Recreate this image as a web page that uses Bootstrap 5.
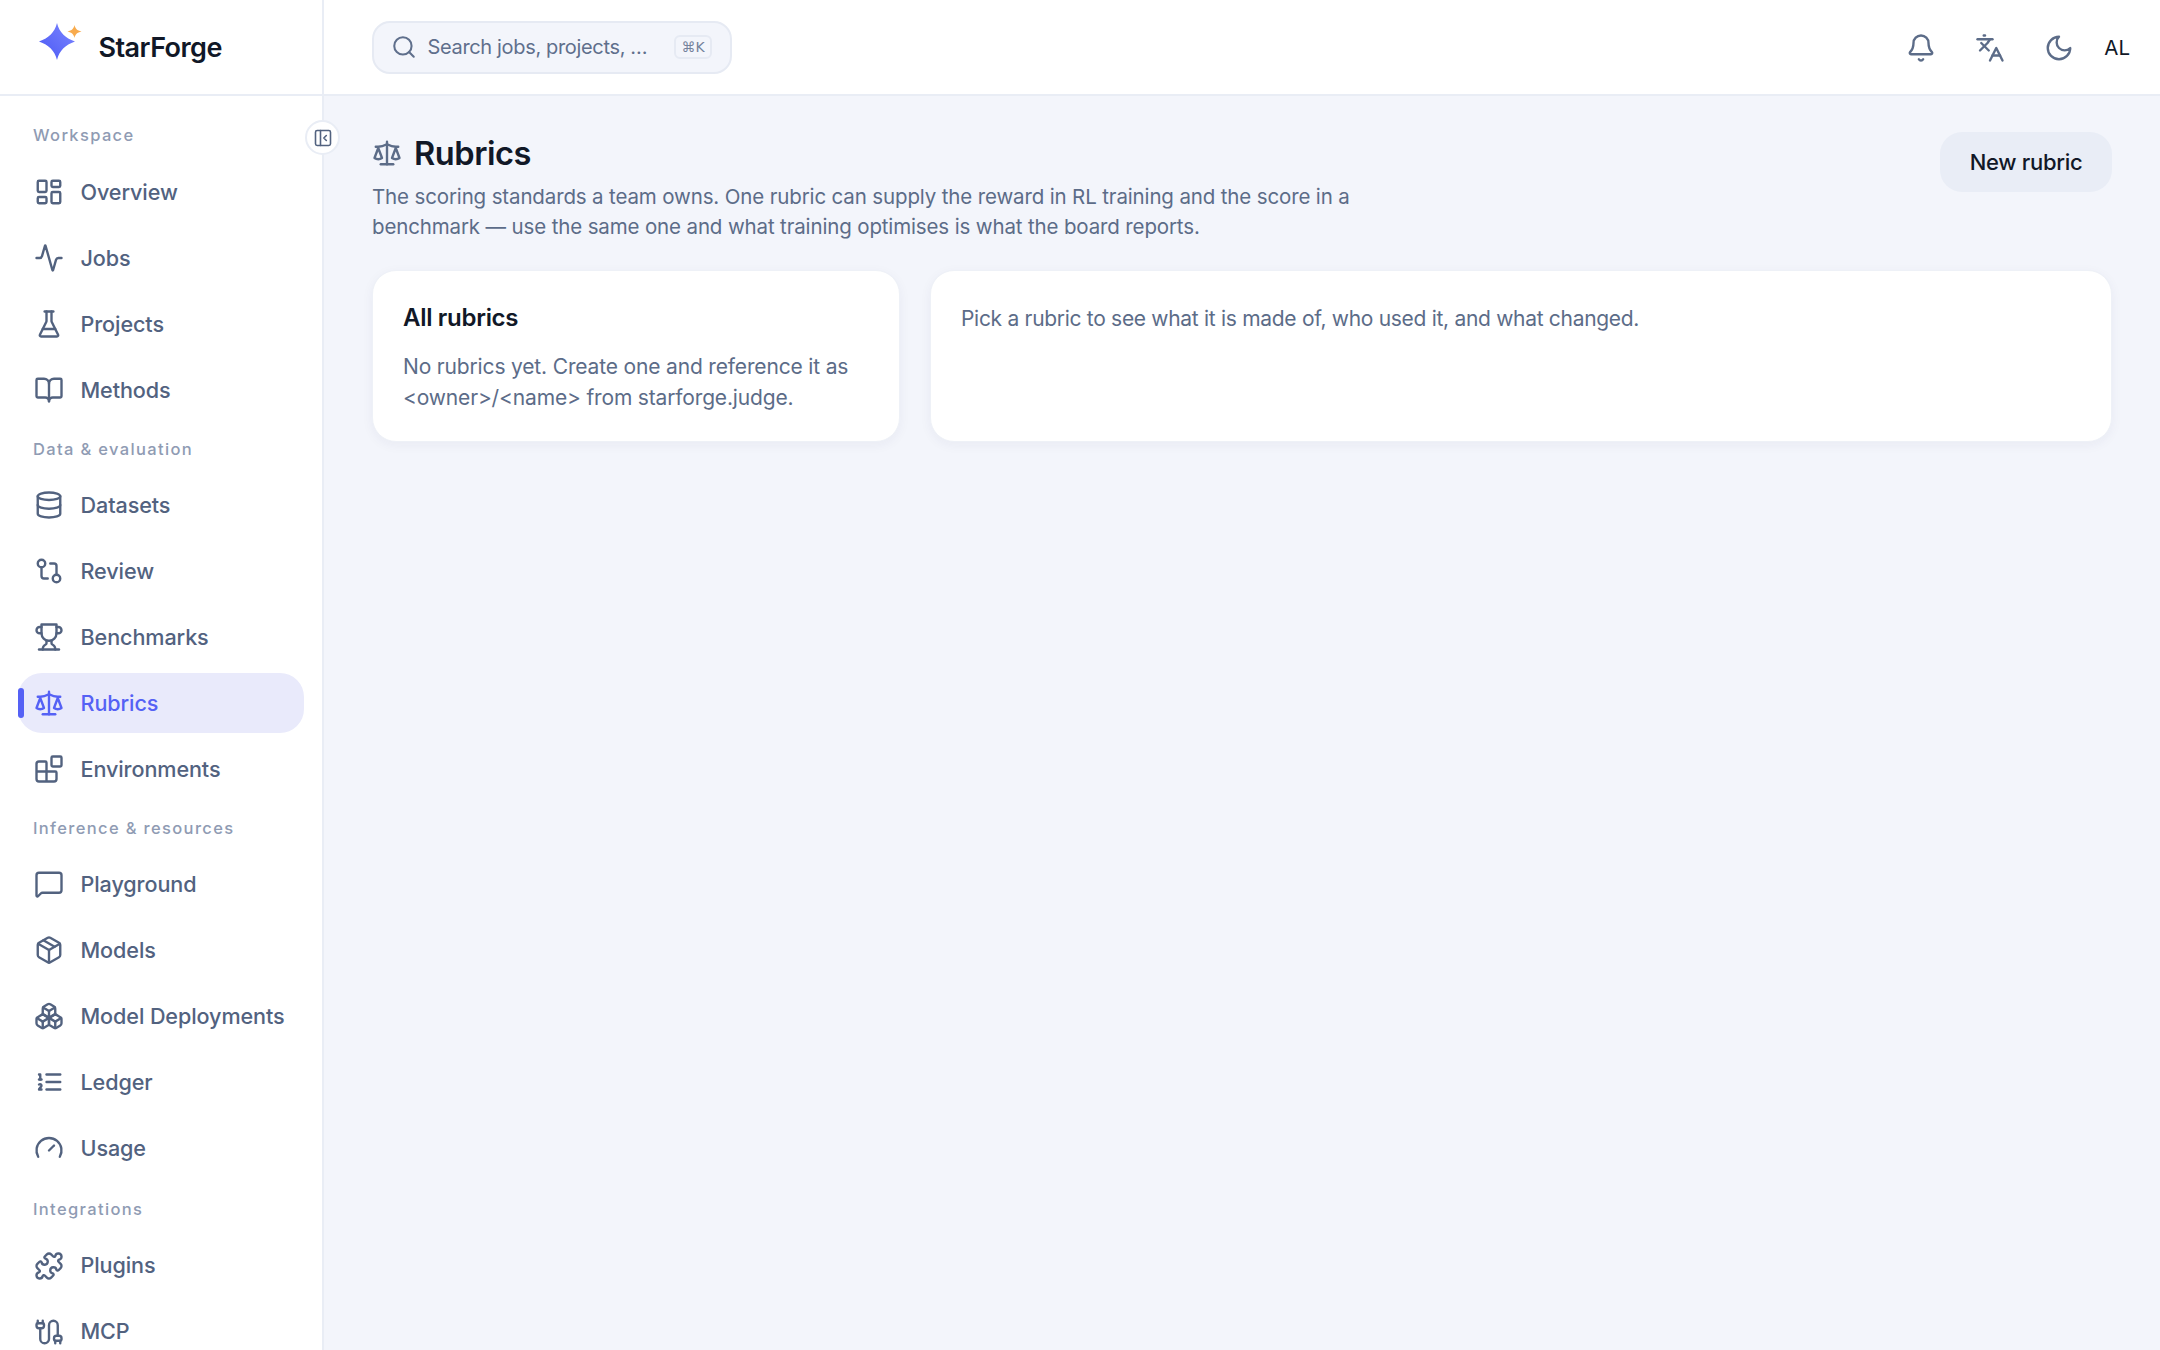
<!doctype html>
<html lang="en">
<head>
<meta charset="utf-8">
<title>Rubrics · StarForge</title>
<link href="https://cdn.jsdelivr.net/npm/bootstrap@5.3.0/dist/css/bootstrap.min.css" rel="stylesheet">
<style>
html,body{height:100%;}
body{font-family:Inter,"Noto Sans",sans-serif;background:#f3f5fb;color:#111827;overflow:hidden;}
svg.ico{fill:none;stroke:currentColor;stroke-width:1.9;stroke-linecap:round;stroke-linejoin:round;flex:none;}
.shell{height:1350px;}
.side{width:324px;flex:none;background:#fff;border-right:2px solid #e9edf5;position:relative;height:1350px;}
.brand{height:96px;border-bottom:2px solid #e9edf5;padding-left:36px;gap:6.500px;margin-right:-2px;}
.brand-name{font-size:27px;font-weight:600;letter-spacing:-.55px;color:#111827;margin-top:2px;}
.side-scroll{padding:27px 18px 0 18px;overflow:hidden;height:1254px;}
.grp{font-size:16.5px;font-weight:500;letter-spacing:1.35px;color:#8f9bb3;line-height:24px;padding-left:15px;}
.grp-next{margin-top:17px;margin-bottom:14px;}
.grp-last{margin-top:18.500px;margin-bottom:15px;}
.grp-first{margin-bottom:15px;}
.side .nav{gap:6px;}
.side .nav-link{height:60px;display:flex;align-items:center;gap:16.500px;padding:0 0 0 16px;border-radius:24px;color:#52627f;font-size:21.6px;font-weight:500;letter-spacing:-.1px;position:relative;}
.side .nav-link.active{background:#e9eafb;color:#5561f5;}
.side .nav-link.active::before{content:"";position:absolute;left:0;top:15px;width:6px;height:30px;border-radius:3px;background:#5561f5;}
.collapse-btn{position:absolute;left:305px;top:120px;width:35px;height:35px;border-radius:50%;background:#fff;border:2px solid #e9edf5;padding:0;display:flex;align-items:center;justify-content:center;color:#52627f;z-index:3;}
.main-col{min-width:0;}
.top{height:96px;background:#fff;border-bottom:2px solid #e9edf5;padding:0 30px 0 48px;}
.search{width:360px;height:53px;background:#f3f5fb;border:2px solid #e6eaf3;border-radius:18px;padding:0 18px 0 17px;gap:10.500px;color:#5f6f8c;font-size:20px;letter-spacing:-.34px;}
.keycap{margin-left:auto;width:38px;height:24px;border:2px solid #e6eaf3;border-radius:6px;font-size:14px;letter-spacing:0;display:flex;align-items:center;justify-content:center;color:#74829c;font-family:"DejaVu Sans",sans-serif;}
.tool{background:none;border:0;padding:0;color:#5c6c88;width:30px;height:30px;display:flex;}
.avatar{font-size:20.5px;color:#111827;margin-left:-9px;}
.tools{gap:39px;padding-top:2px;}
.page{padding:36px 48px 0;}
.page-h{font-size:32.6px;font-weight:600;letter-spacing:-.45px;color:#111827;margin:0;line-height:42px;}
.page-head-row{gap:12px;color:#5c6c88;margin-bottom:8px;}
.lede{font-size:20.5px;line-height:30px;color:#5c6c88;margin:0;width:1000px;letter-spacing:-.14px;}
.new-btn{background:#e9edf6;border:0;border-radius:22px;height:60px;width:172px;padding:0;font-size:22px;font-weight:500;color:#111827;letter-spacing:-.3px;}
.new-btn:hover{background:#e1e6f2;color:#111827;}
.panels{display:grid;grid-template-columns:528px 1fr;gap:30px;margin-top:28px;}
.panel{border:1px solid #eef1f7;border-radius:24px;background:#fff;box-shadow:0 3px 12px rgba(30,45,90,.05);height:172px;padding:30px 30px 0;}
.panel-t{font-size:24px;font-weight:600;letter-spacing:-.3px;color:#111827;line-height:34px;margin:0 0 17px;}
.panel-p{font-size:21px;line-height:30.5px;color:#5c6c88;margin:0;letter-spacing:-.16px;}
.panel-top{padding-top:3px;letter-spacing:-.3px;}
</style>
</head>
<body>
<div class="shell d-flex">
<aside class="side d-flex flex-column">
  <div class="brand d-flex align-items-center">
    <svg width="56" height="50" viewBox="0 0 56 50" aria-hidden="true">
      <defs><linearGradient id="sg" x1="0" y1="1" x2="1" y2="0"><stop offset="0" stop-color="#4a58f4"/><stop offset="1" stop-color="#7c86ff"/></linearGradient></defs>
      <path fill="url(#sg)" d="M21 1 C23.500 10.500 29 16 39 19.500 C29 23 23.500 28.500 21 38 C18.500 28.500 13 23 3 19.500 C13 16 18.500 10.500 21 1Z"/>
      <path fill="#f8ab4d" d="M38.500 3 C39.200 6.500 41 8.500 45.500 9.500 C41 10.500 39.200 12.500 38.500 16 C37.800 12.500 36 10.500 31.500 9.500 C36 8.500 37.800 6.500 38.500 3Z"/>
    </svg>
    <span class="brand-name">StarForge</span>
  </div>
  <button class="collapse-btn" type="button" aria-label="Collapse sidebar">
    <svg class="ico" width="20" height="20" viewBox="0 0 24 24"><rect x="3" y="3" width="18" height="18" rx="2"/><path d="M9 3v18"/><path d="m16 15-3-3 3-3"/></svg>
  </button>
  <div class="side-scroll">
    <div class="grp grp-first">Workspace</div>
    <nav class="nav flex-column">
      <a class="nav-link" href="#"><svg class="ico" width="30" height="30" viewBox="0 0 24 24"><rect x="3" y="3" width="7" height="9" rx="1"/><rect x="14" y="3" width="7" height="5" rx="1"/><rect x="14" y="12" width="7" height="9" rx="1"/><rect x="3" y="16" width="7" height="5" rx="1"/></svg>Overview</a>
      <a class="nav-link" href="#"><svg class="ico" width="30" height="30" viewBox="0 0 24 24"><path d="M22 12h-2.480a2 2 0 0 0-1.930 1.460l-2.350 8.360a.25.25 0 0 1-.48 0L9.240 2.180a.25.25 0 0 0-.48 0l-2.350 8.360A2 2 0 0 1 4.490 12H2"/></svg>Jobs</a>
      <a class="nav-link" href="#"><svg class="ico" width="30" height="30" viewBox="0 0 24 24"><path d="M10 2v7.527a2 2 0 0 1-.211.896L4.720 20.550a1 1 0 0 0 .9 1.450h12.760a1 1 0 0 0 .9-1.450l-5.069-10.127A2 2 0 0 1 14 9.527V2"/><path d="M8.500 2h7"/><path d="M7 16h10"/></svg>Projects</a>
      <a class="nav-link" href="#"><svg class="ico" width="30" height="30" viewBox="0 0 24 24"><path d="M12 7v14"/><path d="M3 18a1 1 0 0 1-1-1V4a1 1 0 0 1 1-1h5a4 4 0 0 1 4 4 4 4 0 0 1 4-4h5a1 1 0 0 1 1 1v13a1 1 0 0 1-1 1h-6a3 3 0 0 0-3 3 3 3 0 0 0-3-3z"/></svg>Methods</a>
    </nav>
    <div class="grp grp-next">Data &amp; evaluation</div>
    <nav class="nav flex-column">
      <a class="nav-link" href="#"><svg class="ico" width="30" height="30" viewBox="0 0 24 24"><ellipse cx="12" cy="5" rx="9" ry="3"/><path d="M3 5V19A9 3 0 0 0 21 19V5"/><path d="M3 12A9 3 0 0 0 21 12"/></svg>Datasets</a>
      <a class="nav-link" href="#"><svg class="ico" width="30" height="30" viewBox="0 0 24 24"><circle cx="18" cy="18" r="3"/><circle cx="6" cy="6" r="3"/><path d="M13 6h3a2 2 0 0 1 2 2v7"/><path d="M11 18H8a2 2 0 0 1-2-2V9"/></svg>Review</a>
      <a class="nav-link" href="#"><svg class="ico" width="30" height="30" viewBox="0 0 24 24"><path d="M6 9H4.500a2.500 2.500 0 0 1 0-5H6"/><path d="M18 9h1.500a2.500 2.500 0 0 0 0-5H18"/><path d="M4 22h16"/><path d="M10 14.660V17c0 .55-.47.98-.97 1.210C7.850 18.750 7 20.240 7 22"/><path d="M14 14.660V17c0 .55.47.98.97 1.210C16.150 18.750 17 20.240 17 22"/><path d="M18 2H6v7a6 6 0 0 0 12 0V2Z"/></svg>Benchmarks</a>
      <a class="nav-link active" href="#"><svg class="ico" width="30" height="30" viewBox="0 0 24 24"><path d="m16 16 3-8 3 8c-.87.65-1.920 1-3 1s-2.130-.35-3-1Z"/><path d="m2 16 3-8 3 8c-.87.65-1.920 1-3 1s-2.130-.35-3-1Z"/><path d="M7 21h10"/><path d="M12 3v18"/><path d="M3 7h2c2 0 5-1 7-2 2 1 5 2 7 2h2"/></svg>Rubrics</a>
      <a class="nav-link" href="#"><svg class="ico" width="30" height="30" viewBox="0 0 24 24"><path d="M10 22V7a1 1 0 0 0-1-1H4a2 2 0 0 0-2 2v12a2 2 0 0 0 2 2h12a2 2 0 0 0 2-2v-5a1 1 0 0 0-1-1H2"/><rect x="14" y="2" width="8" height="8" rx="1"/></svg>Environments</a>
    </nav>
    <div class="grp grp-next">Inference &amp; resources</div>
    <nav class="nav flex-column">
      <a class="nav-link" href="#"><svg class="ico" width="30" height="30" viewBox="0 0 24 24"><path d="M22 17a2 2 0 0 1-2 2H6.828a2 2 0 0 0-1.414.586l-2.202 2.202A.71.71 0 0 1 2 21.286V5a2 2 0 0 1 2-2h16a2 2 0 0 1 2 2z"/></svg>Playground</a>
      <a class="nav-link" href="#"><svg class="ico" width="30" height="30" viewBox="0 0 24 24"><path d="M11 21.730a2 2 0 0 0 2 0l7-4A2 2 0 0 0 21 16V8a2 2 0 0 0-1-1.730l-7-4a2 2 0 0 0-2 0l-7 4A2 2 0 0 0 3 8v8a2 2 0 0 0 1 1.730z"/><path d="M12 22V12"/><path d="m3.300 7 8.700 5 8.700-5"/><path d="m7.500 4.270 9 5.150"/></svg>Models</a>
      <a class="nav-link" href="#"><svg class="ico" width="30" height="30" viewBox="0 0 24 24"><path d="M2.970 12.920A2 2 0 0 0 2 14.630v3.240a2 2 0 0 0 .97 1.710l3 1.800a2 2 0 0 0 2.060 0L12 19v-5.500l-5-3-4.030 2.420Z"/><path d="m7 16.500-4.740-2.850"/><path d="m7 16.500 5-3"/><path d="M7 16.500v5.170"/><path d="M12 13.500V19l3.970 2.380a2 2 0 0 0 2.060 0l3-1.800a2 2 0 0 0 .97-1.710v-3.240a2 2 0 0 0-.97-1.710L17 10.500l-5 3Z"/><path d="m17 16.500-5-3"/><path d="m17 16.500 4.740-2.850"/><path d="M17 16.500v5.170"/><path d="M7.970 4.420A2 2 0 0 0 7 6.130v4.370l5 3 5-3V6.130a2 2 0 0 0-.97-1.710l-3-1.800a2 2 0 0 0-2.060 0l-3 1.800Z"/><path d="M12 8 7.260 5.150"/><path d="m12 8 4.740-2.850"/><path d="M12 13.500V8"/></svg>Model Deployments</a>
      <a class="nav-link" href="#"><svg class="ico" width="30" height="30" viewBox="0 0 24 24"><path d="M10 12h11"/><path d="M10 18h11"/><path d="M10 6h11"/><path d="M4 10h2"/><path d="M4 6h1v4"/><path d="M6 18H4c0-1 2-2 2-3s-1-1.500-2-1"/></svg>Ledger</a>
      <a class="nav-link" href="#"><svg class="ico" width="30" height="30" viewBox="0 0 24 24"><path d="m12 14 4-4"/><path d="M3.340 19a10 10 0 1 1 17.320 0"/></svg>Usage</a>
    </nav>
    <div class="grp grp-last">Integrations</div>
    <nav class="nav flex-column">
      <a class="nav-link" href="#"><svg class="ico" width="30" height="30" viewBox="0 0 24 24"><path d="M15.390 4.390a1 1 0 0 0 1.680-.474 2.500 2.500 0 1 1 3.014 3.015 1 1 0 0 0-.474 1.680l1.683 1.682a2.414 2.414 0 0 1 0 3.414L19.610 15.390a1 1 0 0 1-1.680-.474 2.500 2.500 0 1 0-3.014 3.015 1 1 0 0 1 .474 1.680l-1.683 1.682a2.414 2.414 0 0 1-3.414 0L8.610 19.610a1 1 0 0 0-1.680.474 2.500 2.500 0 1 1-3.014-3.015 1 1 0 0 0 .474-1.680l-1.683-1.682a2.414 2.414 0 0 1 0-3.414L4.390 8.610a1 1 0 0 1 1.680.474 2.500 2.500 0 1 0 3.014-3.015 1 1 0 0 1-.474-1.680l1.683-1.682a2.414 2.414 0 0 1 3.414 0z"/></svg>Plugins</a>
      <a class="nav-link" href="#"><svg class="ico" width="30" height="30" viewBox="0 0 24 24"><path d="M17 21v-2a1 1 0 0 1-1-1v-1a2 2 0 0 1 2-2h2a2 2 0 0 1 2 2v1a1 1 0 0 1-1 1"/><path d="M19 15V6.500a1 1 0 0 0-7 0v11a1 1 0 0 1-7 0V9"/><path d="M21 21v-2h-4"/><path d="M3 5h4V3"/><path d="M7 5a1 1 0 0 1 1 1v1a2 2 0 0 1-2 2H4a2 2 0 0 1-2-2V6a1 1 0 0 1 1-1V3"/></svg>MCP</a>
    </nav>
  </div>
</aside>
<div class="main-col flex-grow-1 d-flex flex-column">
  <header class="top d-flex align-items-center justify-content-between">
    <div class="search d-flex align-items-center">
      <svg class="ico" width="26" height="26" viewBox="0 0 24 24"><path d="m21 21-4.340-4.340"/><circle cx="11" cy="11" r="8"/></svg>
      <span>Search jobs, projects, …</span>
      <span class="keycap">⌘K</span>
    </div>
    <div class="d-flex align-items-center tools">
      <button class="tool" type="button" aria-label="Notifications"><svg class="ico" width="30" height="30" viewBox="0 0 24 24"><path d="M10.268 21a2 2 0 0 0 3.464 0"/><path d="M3.262 15.326A1 1 0 0 0 4 17h16a1 1 0 0 0 .74-1.673C19.410 13.956 18 12.499 18 8A6 6 0 0 0 6 8c0 4.499-1.411 5.956-2.738 7.326"/></svg></button>
      <button class="tool" type="button" aria-label="Language"><svg class="ico" width="30" height="30" viewBox="0 0 24 24"><path d="m5 8 6 6"/><path d="m4 14 6-6 2-3"/><path d="M2 5h12"/><path d="M7 2h1"/><path d="m22 22-5-10-5 10"/><path d="M14 18h6"/></svg></button>
      <button class="tool" type="button" aria-label="Theme"><svg class="ico" width="30" height="30" viewBox="0 0 24 24"><path d="M12 3a6 6 0 0 0 9 9 9 9 0 1 1-9-9Z"/></svg></button>
      <span class="avatar">AL</span>
    </div>
  </header>
  <main class="page flex-grow-1">
    <div class="d-flex justify-content-between align-items-start">
      <div>
        <div class="d-flex align-items-center page-head-row">
          <svg class="ico" width="30" height="30" viewBox="0 0 24 24"><path d="m16 16 3-8 3 8c-.87.65-1.920 1-3 1s-2.130-.35-3-1Z"/><path d="m2 16 3-8 3 8c-.87.65-1.920 1-3 1s-2.130-.35-3-1Z"/><path d="M7 21h10"/><path d="M12 3v18"/><path d="M3 7h2c2 0 5-1 7-2 2 1 5 2 7 2h2"/></svg>
          <h1 class="page-h">Rubrics</h1>
        </div>
        <p class="lede">The scoring standards a team owns. One rubric can supply the reward in RL training and the score in a benchmark — use the same one and what training optimises is what the board reports.</p>
      </div>
      <button class="btn new-btn" type="button">New rubric</button>
    </div>
    <div class="panels">
      <section class="card panel">
        <h2 class="panel-t">All rubrics</h2>
        <p class="panel-p">No rubrics yet. Create one and reference it as &lt;owner&gt;/&lt;name&gt; from starforge.judge.</p>
      </section>
      <section class="card panel">
        <p class="panel-p panel-top">Pick a rubric to see what it is made of, who used it, and what changed.</p>
      </section>
    </div>
  </main>
</div>
</div>
<script src="https://cdn.jsdelivr.net/npm/bootstrap@5.3.0/dist/js/bootstrap.bundle.min.js"></script>
</body>
</html>
